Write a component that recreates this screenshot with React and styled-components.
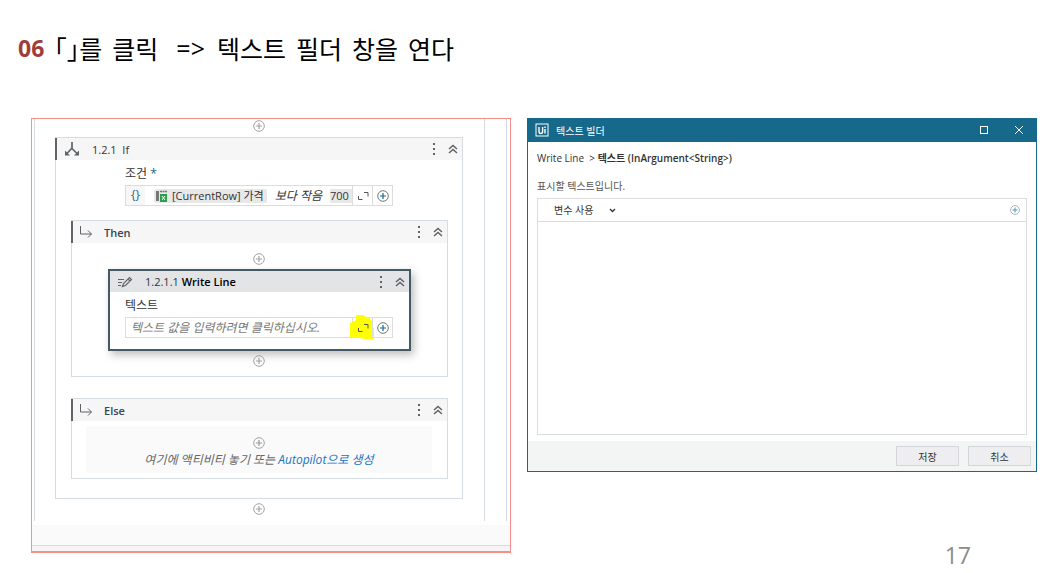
import { useState } from "react"
import styled, { createGlobalStyle } from "styled-components"

const colors = {
  red: "#a03c3a",
  frame: "#fb8c8c",
  line: "#d5dde2",
  field: "#dcdcdc",
  bar: "#17698b",
  dark: "#455a64",
  icon: "#5f6368",
  link: "#1474c4",
}

const font = `"Open Sans", "Noto Sans CJK KR", sans-serif`

export default function App() {
  const [text, setText] = useState("")

  return (
    <Page>
      <GlobalStyle />
      <Heading>
        <Step>06</Step>
        <Brackets>「」를</Brackets>
        <span>클릭</span>
        <Arrow>=&gt;</Arrow>
        <span>텍스트</span>
        <span>필더</span>
        <span>창을</span>
        <span>연다</span>
      </Heading>
      <Columns>
        <Designer>
          <Canvas>
            <Sequence>
              <Insert $top={1} $bottom={5} />
              <IfCard>
                <CardHeader>
                  <BranchIcon />
                  <CardTitle>1.2.1&nbsp; If</CardTitle>
                  <CardActions />
                </CardHeader>
                <IfForm>
                  <FieldLabel htmlFor="condition">조건 <Required>*</Required></FieldLabel>
                  <Field>
                    <Braces>{"{}"}</Braces>
                    <Expression>
                      <Pill><RowIcon />[CurrentRow] 가격</Pill>
                      <em>보다 작음</em>
                      <Amount id="condition" defaultValue="700" />
                    </Expression>
                    <FieldButton aria-label="expand"><ExpandIcon /></FieldButton>
                    <FieldButton aria-label="add"><PlusIcon size={12} color={colors.bar} /></FieldButton>
                  </Field>
                </IfForm>
                <Branch>
                  <BranchHeader name="Then" />
                  <Insert $top={10} $bottom={4} />
                  <WriteCard>
                    <CardHeader $selected>
                      <WriteIcon />
                      <CardTitle>1.2.1.1 <b>Write Line</b></CardTitle>
                      <CardActions />
                    </CardHeader>
                    <WriteForm>
                      <FieldLabel htmlFor="line">텍스트</FieldLabel>
                      <Field>
                        <TextInput id="line" placeholder="텍스트 값을 입력하려면 클릭하십시오." />
                        <FieldButton aria-label="expand">
                          <Marker viewBox="0 0 25 27">
                            <path d="M6 1h7l3 2h4v3l3 1v6l1 1v11h-8l-7-1H0V9l6-3z" fill="#ffff00" />
                          </Marker>
                          <ExpandIcon />
                        </FieldButton>
                        <FieldButton aria-label="add"><PlusIcon size={12} color={colors.bar} /></FieldButton>
                      </Field>
                    </WriteForm>
                  </WriteCard>
                  <Insert $top={4} $bottom={9} />
                </Branch>
                <Branch>
                  <BranchHeader name="Else" />
                  <DropArea>
                    <PlusIcon size={12} color="#9a9a9a" />
                    <p>여기에 액티비티 놓기 또는 <a href="#autopilot">Autopilot으로 생성</a></p>
                  </DropArea>
                </Branch>
              </IfCard>
              <Insert $top={4} $bottom={6} />
            </Sequence>
          </Canvas>
          <CanvasEnd />
          <StatusBar />
        </Designer>
        <div>
          <Window>
            <TitleBar>
              <Logo viewBox="0 0 14 14">
                <rect x="1" y="1" width="12" height="12" fill="none" stroke="#fff" strokeWidth="1" />
                <path d="M4 4v4.5q0 2 1.8 2t1.8-2V4M10 6v4.5M10 3.6v1.4" fill="none" stroke="#fff" strokeWidth="1.4" />
              </Logo>
              <WindowTitle>텍스트 빌더</WindowTitle>
              <WindowButton aria-label="maximize">
                <svg width="10" height="10"><rect x="1.5" y="1.5" width="7" height="7" fill="none" stroke="#fff" /></svg>
              </WindowButton>
              <WindowButton aria-label="close">
                <svg width="10" height="10"><path d="M1 1l8 8M9 1l-8 8" stroke="#fff" /></svg>
              </WindowButton>
            </TitleBar>
            <WindowBody>
              <Breadcrumb>Write Line&nbsp; &gt; <b>텍스트 (InArgument&lt;String&gt;)</b></Breadcrumb>
              <Description htmlFor="editor">표시할 텍스트입니다.</Description>
              <Editor>
                <Toolbar>
                  <Picker>
                    <select aria-label="변수 사용">
                      <option>변수 사용</option>
                    </select>
                    <svg width="7" height="5"><path d="M1 1l2.5 2.5L6 1" fill="none" stroke="#333" strokeWidth="1.3" /></svg>
                  </Picker>
                  <BareButton aria-label="add"><PlusIcon size={10} color="#4b9ac0" /></BareButton>
                </Toolbar>
                <TextArea id="editor" value={text} onChange={e => setText(e.target.value)} />
              </Editor>
            </WindowBody>
            <WindowFooter>
              <FooterButton>저장</FooterButton>
              <FooterButton>취소</FooterButton>
            </WindowFooter>
          </Window>
          <PageNumber>17</PageNumber>
        </div>
      </Columns>
    </Page>
  )
}

function Insert({ $top, $bottom }) {
  return (
    <InsertRow $top={$top} $bottom={$bottom}>
      <BareButton aria-label="insert"><PlusIcon size={12} color="#a3a3a3" /></BareButton>
    </InsertRow>
  )
}

function BranchHeader({ name }) {
  return (
    <CardHeader>
      <svg width="12" height="12" fill="none" stroke={colors.icon}>
        <path d="M.5 0v8h11M8 4.500L11.500 8 8 11.500" />
      </svg>
      <BranchName>{name}</BranchName>
      <CardActions />
    </CardHeader>
  )
}

function CardActions() {
  return (
    <Actions>
      <BareButton aria-label="menu">
        <svg width="4" height="14" fill={colors.icon}>
          <rect x="1" y="1" width="2" height="2" />
          <rect x="1" y="6" width="2" height="2" />
          <rect x="1" y="11" width="2" height="2" />
        </svg>
      </BareButton>
      <BareButton aria-label="collapse">
        <svg width="10" height="10" fill="none" stroke={colors.icon} strokeWidth="1.500">
          <path d="M1 5l4-3.500L9 5M1 9l4-3.500L9 9" />
        </svg>
      </BareButton>
    </Actions>
  )
}

function PlusIcon({ size, color }) {
  return (
    <svg width={size} height={size} viewBox="0 0 12 12" fill="none">
      <circle cx="6" cy="6" r="5.300" stroke={color === colors.bar ? "#777" : "#a3a3a3"} />
      <path d="M6 3v6M3 6h6" stroke={color} strokeWidth="1.200" />
    </svg>
  )
}

function ExpandIcon() {
  return (
    <Above width="12" height="10" fill="none" stroke="#555">
      <path d="M7 1.500h4v4M1.500 5v3.500h4" />
    </Above>
  )
}

function BranchIcon() {
  return (
    <svg width="16" height="16" fill="none" stroke={colors.icon} strokeWidth="1.700">
      <path d="M8 1v6L3 12.500M8 7.500l5 5" />
      <path d="M1 9.500v5h5zM15 9.500v5h-5z" fill={colors.icon} stroke="none" />
    </svg>
  )
}

function WriteIcon() {
  return (
    <svg width="16" height="12" fill="none" stroke={colors.icon} strokeWidth="1.200">
      <path d="M1 3.500h6M1 6.500h4M1 9.500h3" />
      <path d="M5.500 10.500l1-3 6-6 2 2-6 6zM11 3l2 2" />
    </svg>
  )
}

function RowIcon() {
  return (
    <svg width="13" height="12">
      <rect x="1" y="1" width="3" height="10" fill="#777" />
      <path d="M5 1.500h7" stroke="#777" strokeWidth="1.500" strokeDasharray="2 .5" />
      <rect x="5" y="4" width="7" height="8" fill="#2f9e4f" />
      <path d="M7 6l3 4M10 6l-3 4" stroke="#fff" />
    </svg>
  )
}

const GlobalStyle = createGlobalStyle`
  * {
    box-sizing: border-box;
  }
  body {
    margin: 0;
    background: #fff;
    color: #333;
    font-family: ${font};
    font-size: 12px;
  }
  svg {
    display: block;
    flex: none;
  }
  p {
    margin: 0;
  }
  button, input, select, textarea {
    font: inherit;
    color: inherit;
  }
`
const Page = styled.main`
  padding: 32px 9px 0 31px;
`
const Heading = styled.h1`
  display: flex;
  align-items: center;
  gap: 10px;
  height: 32px;
  margin: 0 0 54px -13px;
  font-size: 25px;
  font-weight: 400;
  color: #000;
  white-space: nowrap;
`
const Step = styled.strong`
  font-size: 23px;
  color: ${colors.red};
`
const Brackets = styled.span`
  font-feature-settings: "halt";
`
const Arrow = styled.span`
  padding: 0 2px 0 8px;
`
const Columns = styled.div`
  display: grid;
  grid-template-columns: 480fr 510fr;
  align-items: start;
  gap: 16px;
`
const Designer = styled.section`
  border: 1px solid ${colors.frame};
  border-bottom-width: 2px;
`
const Canvas = styled.div`
  margin: 0 3px 4px 2px;
  border: solid ${colors.line};
  border-width: 0 1px;
`
const Sequence = styled.div`
  margin-right: 21px;
  border-right: 1px solid ${colors.line};
`
const CanvasEnd = styled.div`
  height: 20px;
  background: #fafafa;
`
const StatusBar = styled.div`
  height: 6px;
  border-top: 1px solid ${colors.line};
  background: #f5f5f5;
`
const InsertRow = styled.div`
  display: flex;
  justify-content: center;
  padding: ${p => p.$top}px 1px ${p => p.$bottom}px 0;
`
const BareButton = styled.button`
  display: flex;
  padding: 0;
  border: 0;
  background: none;
`
const IfCard = styled.article`
  margin: 0 21px 0 20px;
  padding-bottom: 19px;
  border: 1px solid ${colors.line};
`
const CardHeader = styled.header`
  display: flex;
  align-items: center;
  gap: 12px;
  height: ${p => p.$selected ? 21 : 22}px;
  margin-left: ${p => p.$selected ? 0 : -1}px;
  padding: 0 4px 0 7px;
  border-left: ${p => p.$selected ? "0" : `2px solid ${colors.icon}`};
  background: ${p => p.$selected ? "#e3e4e6" : "#f6f6f6"};
`
const CardTitle = styled.span`
  font-size: 11px;
  color: #333;

  b {
    font-weight: 600;
    color: #000;
  }
`
const BranchName = styled.span`
  font-size: 11px;
  font-weight: 600;
  color: #37474f;
`
const Actions = styled.div`
  display: flex;
  align-items: center;
  gap: 12px;
  margin-left: auto;
`
const IfForm = styled.div`
  padding: 0 69px;
`
const WriteForm = styled.div`
  padding: 0 16px 11px 15px;
`
const FieldLabel = styled.label`
  display: block;
  height: 25px;
  padding-top: 2px;
  line-height: 23px;
  font-size: 12px;
`
const Required = styled.span`
  color: ${colors.bar};
`
const Field = styled.div`
  display: flex;
  height: 21px;
  border: 1px solid ${colors.field};
`
const Braces = styled.span`
  width: 19px;
  background: #f7f7f7;
  color: ${colors.bar};
  line-height: 18px;
  text-align: center;
`
const Expression = styled.div`
  display: flex;
  flex: 1;
  align-items: center;
  min-width: 0;
  gap: 8px;
  padding-left: 9px;
  overflow: hidden;
  white-space: nowrap;
  line-height: 16px;
`
const Pill = styled.span`
  display: flex;
  align-items: center;
  gap: 4px;
  height: 14px;
  padding: 0 3px 0 1px;
  border-radius: 2px;
  background: #e8e8e8;
  font-size: 11px;
`
const Amount = styled.input`
  flex: 1;
  width: 20px;
  min-width: 0;
  height: 14px;
  padding: 0;
  border: 0;
  background: #e8e8e8;
  font-size: 11px;
`
const FieldButton = styled.button`
  position: relative;
  display: flex;
  align-items: center;
  justify-content: center;
  width: 20px;
  padding: 0;
  border: 0;
  border-left: 1px solid ${colors.field};
  background: none;
`
const Marker = styled.svg`
  position: absolute;
  top: -4px;
  left: -3px;
  width: 25px;
  height: 27px;
`
const Above = styled.svg`
  position: relative;
`
const TextInput = styled.input`
  flex: 1;
  min-width: 0;
  padding: 0 5px;
  border: 0;
  font-style: italic;

  &::placeholder {
    color: #777;
  }
`
const Branch = styled.section`
  margin: 14px 14px 0 15px;
  border: 1px solid ${colors.line};

  & + & {
    margin-top: 21px;
  }
`
const WriteCard = styled.article`
  margin: 0 36px;
  border: 2px solid ${colors.dark};
  background: #fff;
  box-shadow: 3px 4px 8px rgba(0, 0, 0, 0.25);
`
const DropArea = styled.div`
  display: flex;
  flex-direction: column;
  align-items: center;
  gap: 1px;
  height: 47px;
  margin: 5px 15px 5px 14px;
  padding-top: 11px;
  background: #fafafa;
  color: #666;
  font-style: italic;
  line-height: 20px;
  white-space: nowrap;

  a {
    color: ${colors.link};
    text-decoration: none;
  }
`
const Window = styled.section`
  border: 1px solid ${colors.bar};
  border-top: 0;
  font-size: 10px;
`
const TitleBar = styled.header`
  display: flex;
  align-items: center;
  height: 24px;
  padding: 0 12px 0 7px;
  background: ${colors.bar};
  color: #fff;
`
const Logo = styled.svg`
  width: 14px;
  height: 14px;
`
const WindowTitle = styled.h2`
  flex: 1;
  margin: 0 0 0 7px;
  font-size: 10px;
  font-weight: 400;
`
const WindowButton = styled(BareButton)`
  margin-left: 25px;
`
const WindowBody = styled.div`
  padding: 8px 9px 6px;
`
const Breadcrumb = styled.p`
  margin-bottom: 12px;
  line-height: 16px;

  b {
    font-weight: 600;
  }
`
const Description = styled.label`
  display: block;
  margin-bottom: 4px;
  line-height: 16px;
  color: #555;
`
const Editor = styled.div`
  border: 1px solid ${colors.field};
`
const Toolbar = styled.div`
  display: flex;
  align-items: center;
  justify-content: space-between;
  height: 23px;
  padding: 0 6px 0 16px;
  border-bottom: 1px solid ${colors.field};
`
const Picker = styled.span`
  display: flex;
  align-items: center;
  gap: 15px;

  select {
    padding: 0;
    border: 0;
    background: none;
    appearance: none;
  }
`
const TextArea = styled.textarea`
  display: block;
  width: 100%;
  height: 212px;
  padding: 6px;
  border: 0;
  resize: none;
`
const WindowFooter = styled.footer`
  display: flex;
  align-items: center;
  justify-content: flex-end;
  gap: 9px;
  height: 30px;
  padding-right: 5px;
  background: #f3f5f5;
`
const FooterButton = styled.button`
  width: 63px;
  height: 20px;
  padding: 0;
  border: 1px solid #d2d5d9;
  background: #eeeef0;
`
const PageNumber = styled.p`
  margin-top: 67px;
  padding-right: 66px;
  font-size: 23px;
  line-height: 32px;
  text-align: right;
  color: #8c8c8c;
`
